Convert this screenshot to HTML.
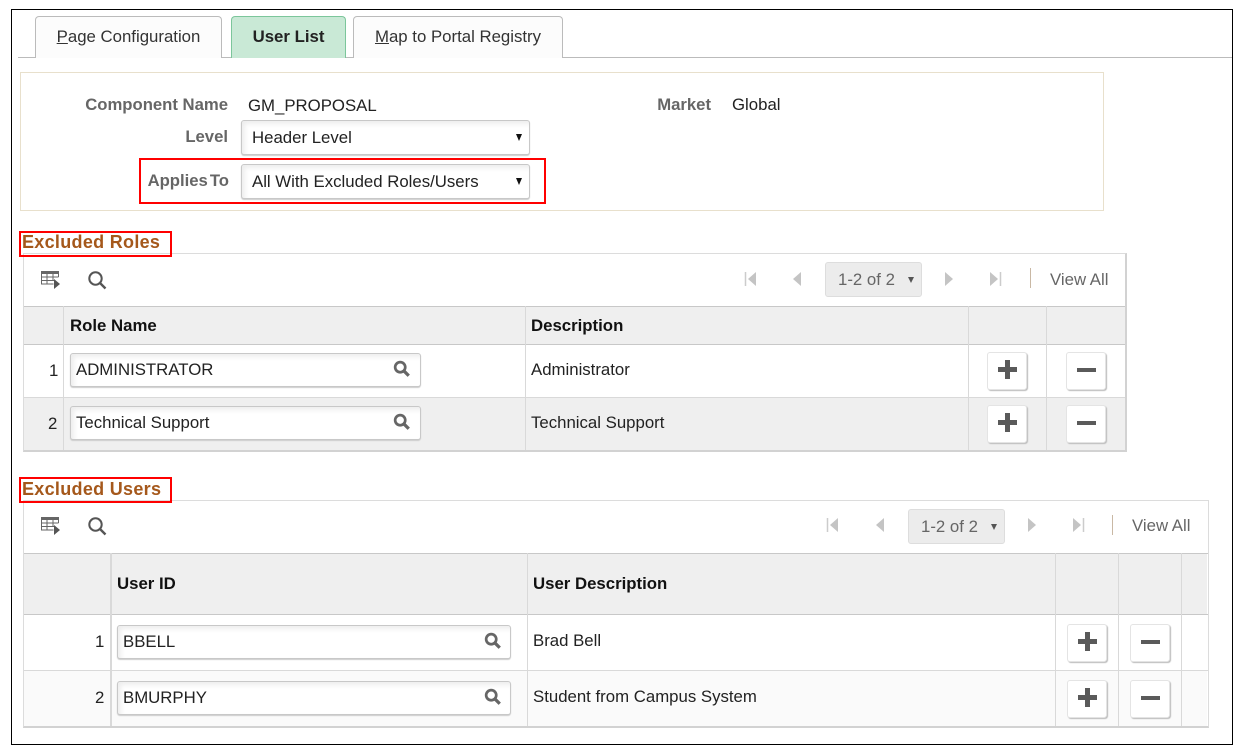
<!DOCTYPE html>
<html><head><meta charset="utf-8"><style>
html,body{margin:0;padding:0}
html{background:#fff}
body{width:1240px;height:752px;position:relative;overflow:hidden;font-family:"Liberation Sans",sans-serif;font-size:16.8px;color:#222}
div,span,svg{position:absolute;box-sizing:border-box;white-space:nowrap}
u{text-decoration:underline}
.tab{top:16px;height:42px;border:1px solid #bbb;border-bottom:0;border-radius:4px 4px 0 0;background:#fcfcfc;text-align:center;line-height:39px;color:#333}
.lbl{font-weight:bold;color:#666;text-align:right;line-height:20px;font-size:16.7px}
.t{line-height:20px}
.sel{left:241px;width:289px;height:35px;border:1px solid #c8c8c8;border-radius:3px;background:#fff;box-shadow:inset 3px 3px 5px #eee,0 1px 1px #ccc;line-height:34px;padding-left:10px;color:#222}
.sel i{position:absolute;right:7px;top:13px;border:3.5px solid transparent;border-top:7px solid #111;border-bottom:0}
.red{border:2px solid #f00}
.h{font-weight:bold;font-size:18px;color:#a5581b;line-height:20px;letter-spacing:.3px}
.line{background:#d9d9d9}
.head{background:#efefef}
.th{font-weight:bold;color:#111;line-height:20px}
.inp{height:34px;border:1px solid #c8c8c8;border-radius:3px;background:#fff;box-shadow:inset 3px 3px 5px #eee,0 1px 1px #ccc;line-height:31px;padding-left:5px;color:#222}
.btn{width:40px;height:38px;background:#fff;border:1px solid #e4e4e4;border-radius:3px;box-shadow:1px 1px 1px #bbb}
.btn b{position:absolute;background:#5a5a5a}
.pg{height:35px;width:97px;background:#ececec;border:1px solid #ddd;border-radius:3px;color:#666;line-height:33px;padding-left:12px}
.pg i{position:absolute;right:7px;top:14px;border:3.5px solid transparent;border-top:6px solid #555;border-bottom:0}
.va{color:#666;line-height:20px}
.div{width:1px;height:20px;background:#c9b8a4}
#w{left:0;top:0;width:1240px;height:752px;filter:blur(.3px)}
</style></head><body><div id="w">
<svg width="0" height="0" style="position:absolute"><defs>
<symbol id="s" viewBox="0 0 20 20"><circle cx="8.5" cy="8.5" r="6.2" fill="none" stroke="#555" stroke-width="2"/><path d="M13 13l5.500 5.500" stroke="#555" stroke-width="2.400" fill="none"/></symbol>
<symbol id="ss" viewBox="0 0 20 20"><circle cx="8" cy="8" r="5.600" fill="none" stroke="#666" stroke-width="3"/><path d="M12 12l5.500 5.500" stroke="#666" stroke-width="3.600" fill="none"/></symbol>
<symbol id="g" viewBox="0 0 20 20"><path d="M0 0h18v3H0z" fill="#666"/><path d="M.5 3v10h12M.5 6h17M.5 9.500h14M6 3v10M12 3v6M17.500 3v3" stroke="#666" fill="none"/><path d="M13 8l6 5-6 5z" fill="#555"/></symbol>
<symbol id="first" viewBox="0 0 14 16"><path d="M1.500 1v14" stroke="#ccc" stroke-width="1.500"/><path d="M12 1v14L4 8z" fill="#c4c4c4"/></symbol>
<symbol id="prev" viewBox="0 0 14 16"><path d="M11 1v14L3 8z" fill="#c4c4c4"/></symbol>
<symbol id="next" viewBox="0 0 14 16"><path d="M3 1v14l8-7z" fill="#c4c4c4"/></symbol>
<symbol id="last" viewBox="0 0 14 16"><path d="M12.500 1v14" stroke="#ccc" stroke-width="1.500"/><path d="M2 1v14l8-7z" fill="#c4c4c4"/></symbol>
</defs></svg>

<div style="left:11px;top:9px;width:1222px;height:736px;border:1px solid #000"></div>

<div style="left:18px;top:57px;width:1214px;height:1px;background:#bbb"></div>
<div class="tab" style="left:35px;width:187px"><u>P</u>age Configuration</div>
<div class="tab" style="left:231px;width:115px;background:#c9e9d6;border-color:#7cc69b;font-weight:bold;color:#222">User List</div>
<div class="tab" style="left:353px;width:210px"><u>M</u>ap to Portal Registry</div>

<div style="left:20px;top:72px;width:1084px;height:139px;border:1px solid #e8e0cc"></div>
<div class="lbl" style="left:40px;width:188px;top:95px">Component Name</div>
<div class="t" style="left:248px;top:96px">GM_PROPOSAL</div>
<div class="lbl" style="left:600px;width:111px;top:95px">Market</div>
<div class="t" style="left:732px;top:95px">Global</div>
<div class="lbl" style="left:100px;width:128px;top:127px">Level</div>
<div class="sel" style="top:120px">Header Level<i></i></div>
<div class="lbl" style="left:100px;width:129px;top:171px">Applies<span style="position:static;margin-left:2px">To</span></div>
<div class="sel" style="top:164px">All With Excluded Roles/Users<i></i></div>
<div class="red" style="left:139px;top:158px;width:407px;height:46px"></div>

<div style="left:23px;top:253px;width:1104px;height:199px;border:1px solid #dcdcdc;border-bottom:2px solid #d2d2d2;border-right:2px solid #d2d2d2"></div>
<div class="h" style="left:22px;top:232px">Excluded Roles</div>
<div class="red" style="left:19px;top:231px;width:153px;height:26px"></div>

<!-- Grid 1 -->
<svg style="left:41px;top:271px" width="20" height="20"><use href="#g"/></svg>
<svg style="left:87px;top:270px" width="20" height="20"><use href="#s"/></svg>
<svg style="left:744px;top:271px" width="14" height="16"><use href="#first"/></svg>
<svg style="left:790px;top:271px" width="14" height="16"><use href="#prev"/></svg>
<div class="pg" style="left:825px;top:262px">1-2 of 2<i></i></div>
<svg style="left:942px;top:271px" width="14" height="16"><use href="#next"/></svg>
<svg style="left:988px;top:271px" width="14" height="16"><use href="#last"/></svg>
<div class="div" style="left:1030px;top:268px"></div>
<div class="va" style="left:1050px;top:270px">View All</div>

<div class="head" style="left:24px;top:306px;width:1101px;height:39px"></div>
<div style="left:24px;top:398px;width:1101px;height:52px;background:#efefef"></div>
<div class="line" style="left:24px;top:306px;width:1101px;height:1px;background:#c8c8c8"></div>
<div class="line" style="left:24px;top:344px;width:1101px;height:1px;background:#c8c8c8"></div>
<div class="line" style="left:24px;top:397px;width:1101px;height:1px"></div>
<div class="line" style="left:63px;top:306px;width:1px;height:144px"></div>
<div class="line" style="left:525px;top:306px;width:1px;height:144px"></div>
<div class="line" style="left:968px;top:306px;width:1px;height:144px"></div>
<div class="line" style="left:1046px;top:306px;width:1px;height:144px"></div>
<div class="th" style="left:70px;top:316px">Role Name</div>
<div class="th" style="left:531px;top:316px">Description</div>
<div class="t" style="left:49px;top:361px">1</div>
<div class="t" style="left:48px;top:414px">2</div>
<div class="inp" style="left:70px;top:353px;width:351px">ADMINISTRATOR<svg style="left:322px;top:6px" width="18" height="18"><use href="#ss"/></svg></div>
<div class="inp" style="left:70px;top:406px;width:351px">Technical Support<svg style="left:322px;top:6px" width="18" height="18"><use href="#ss"/></svg></div>
<div class="t" style="left:531px;top:360px">Administrator</div>
<div class="t" style="left:531px;top:413px">Technical Support</div>
<div class="btn" style="left:987px;top:352px"><b style="left:10px;top:14px;width:19px;height:5px"></b><b style="left:17px;top:7px;width:5px;height:19px"></b></div>
<div class="btn" style="left:1066px;top:352px"><b style="left:10px;top:15px;width:19px;height:4px"></b></div>
<div class="btn" style="left:987px;top:405px"><b style="left:10px;top:14px;width:19px;height:5px"></b><b style="left:17px;top:7px;width:5px;height:19px"></b></div>
<div class="btn" style="left:1066px;top:405px"><b style="left:10px;top:15px;width:19px;height:4px"></b></div>

<div style="left:23px;top:500px;width:1186px;height:228px;border:1px solid #dcdcdc;border-bottom:2px solid #d2d2d2"></div>
<div class="h" style="left:22px;top:479px">Excluded Users</div>
<div class="red" style="left:19px;top:477px;width:153px;height:26px"></div>

<!-- Grid 2 -->
<svg style="left:41px;top:517px" width="20" height="20"><use href="#g"/></svg>
<svg style="left:87px;top:516px" width="20" height="20"><use href="#s"/></svg>
<svg style="left:826px;top:517px" width="14" height="16"><use href="#first"/></svg>
<svg style="left:873px;top:517px" width="14" height="16"><use href="#prev"/></svg>
<div class="pg" style="left:908px;top:509px">1-2 of 2<i></i></div>
<svg style="left:1025px;top:517px" width="14" height="16"><use href="#next"/></svg>
<svg style="left:1071px;top:517px" width="14" height="16"><use href="#last"/></svg>
<div class="div" style="left:1112px;top:515px"></div>
<div class="va" style="left:1132px;top:516px">View All</div>

<div class="head" style="left:24px;top:553px;width:1183px;height:61px"></div>
<div style="left:24px;top:671px;width:1183px;height:55px;background:#fafafa"></div>
<div class="line" style="left:24px;top:553px;width:1184px;height:1px;background:#c8c8c8"></div>
<div class="line" style="left:24px;top:614px;width:1184px;height:1px;background:#c8c8c8"></div>
<div class="line" style="left:24px;top:670px;width:1184px;height:1px"></div>
<div class="line" style="left:110px;top:553px;width:2px;height:173px"></div>
<div class="line" style="left:527px;top:553px;width:1px;height:173px"></div>
<div class="line" style="left:1055px;top:553px;width:1px;height:173px"></div>
<div class="line" style="left:1118px;top:553px;width:1px;height:173px"></div>
<div class="line" style="left:1181px;top:553px;width:1px;height:173px"></div>
<div class="th" style="left:117px;top:574px">User ID</div>
<div class="th" style="left:533px;top:574px">User Description</div>
<div class="t" style="left:95px;top:632px">1</div>
<div class="t" style="left:95px;top:688px">2</div>
<div class="inp" style="left:117px;top:625px;width:394px">BBELL<svg style="left:366px;top:6px" width="18" height="18"><use href="#ss"/></svg></div>
<div class="inp" style="left:117px;top:681px;width:394px">BMURPHY<svg style="left:366px;top:6px" width="18" height="18"><use href="#ss"/></svg></div>
<div class="t" style="left:533px;top:631px">Brad Bell</div>
<div class="t" style="left:533px;top:687px">Student from Campus System</div>
<div class="btn" style="left:1067px;top:624px"><b style="left:10px;top:14px;width:19px;height:5px"></b><b style="left:17px;top:7px;width:5px;height:19px"></b></div>
<div class="btn" style="left:1130px;top:624px"><b style="left:10px;top:15px;width:19px;height:4px"></b></div>
<div class="btn" style="left:1067px;top:680px"><b style="left:10px;top:14px;width:19px;height:5px"></b><b style="left:17px;top:7px;width:5px;height:19px"></b></div>
<div class="btn" style="left:1130px;top:680px"><b style="left:10px;top:15px;width:19px;height:4px"></b></div>
</div></body></html>
